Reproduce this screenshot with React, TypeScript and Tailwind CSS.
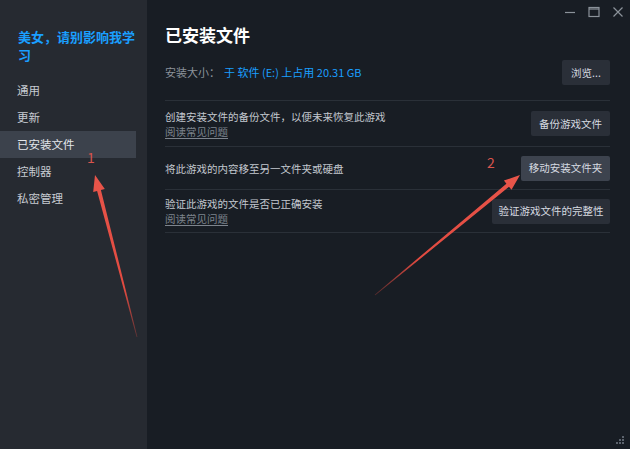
import { Fragment } from 'react';

const navItems = ['通用', '更新', '已安装文件', '控制器', '私密管理'];

function Row({ text, faq, button, width, active, first }: { text: string; faq?: boolean; button: string; width: string; active?: boolean; first?: boolean }) {
  return (
    <div className={`flex items-center justify-between border-b border-[#2a3038] ${first ? 'h-[46px]' : 'h-[43px]'}`}>
      <div className="flex flex-col leading-[15px]">
        <span className="text-[10.5px] text-[#c3c8cf]">{text}</span>
        {faq && <span className="text-[10.5px] text-[#7d848d] underline underline-offset-2">阅读常见问题</span>}
      </div>
      <button
        className={`h-[25px] ${width} text-[10.5px] text-[#d6dae0] rounded-[2px] ${active ? 'bg-[#3d434e]' : 'bg-[#2a2f38]'}`}
      >
        {button}
      </button>
    </div>
  );
}

export default function App() {
  return (
    <div
      className="relative w-[630px] h-[449px] flex bg-[#181d24] overflow-hidden"
      style={{ fontFamily: '"Noto Sans CJK SC", "Noto Sans", sans-serif' }}
    >
      {/* sidebar */}
      <aside className="w-[147px] shrink-0 bg-[#262a31] pt-[28px]">
        <h2 className="pl-[18px] w-[140px] text-[13px] leading-[18px] font-bold text-[#1a9fff]">美女，请别影响我学习</h2>
        <nav className="mt-[13px] flex flex-col">
          {navItems.map((item) => (
            <Fragment key={item}>
              <div
                className={`h-[27px] w-[136px] flex items-center pl-[17px] text-[11.5px] ${
                  item === '已安装文件' ? 'bg-[#3c424c] text-[#e4e7eb]' : 'text-[#c6cbd1]'
                }`}
              >
                {item}
              </div>
            </Fragment>
          ))}
        </nav>
      </aside>

      {/* main */}
      <main className="relative flex-1 pt-[24px] pl-[18px] pr-[20px]">
        <div className="absolute top-[6px] right-[6px] flex items-center gap-[12px] text-[#8b929a]">
          <svg width="12" height="12" viewBox="0 0 12 12"><path d="M1 6.5h10" stroke="currentColor" strokeWidth="1.2" /></svg>
          <svg width="12" height="12" viewBox="0 0 12 12"><rect x="1" y="1.5" width="10" height="9" fill="none" stroke="currentColor" strokeWidth="1.2" /><path d="M1 3h10" stroke="currentColor" strokeWidth="1.2" /></svg>
          <svg width="12" height="12" viewBox="0 0 12 12"><path d="M1.5 1.5l9 9M10.5 1.5l-9 9" stroke="currentColor" strokeWidth="1.2" /></svg>
        </div>

        <h1 className="text-[17px] leading-[22px] font-bold text-white">已安装文件</h1>

        <div className="mt-[14px] h-[25px] flex items-center justify-between">
          <div className="text-[11px]">
            <span className="text-[#8b929a]">安装大小：</span>
            <span className="ml-[4px] text-[#1a9fff]">于 软件 (E:) 上占用 20.31 GB</span>
          </div>
          <button className="h-[25px] w-[48px] text-[10.5px] text-[#d6dae0] bg-[#2a2f38] rounded-[2px]">浏览...</button>
        </div>

        <div className="mt-[15px] border-t border-[#2a3038]">
          <Row first text="创建安装文件的备份文件，以便未来恢复此游戏" faq button="备份游戏文件" width="w-[79px]" />
          <Row text="将此游戏的内容移至另一文件夹或硬盘" button="移动安装文件夹" width="w-[89px]" active />
          <Row text="验证此游戏的文件是否已正确安装" faq button="验证游戏文件的完整性" width="w-[118px]" />
        </div>

        <div className="absolute bottom-[4px] right-[5px]">
          <svg width="10" height="10" viewBox="0 0 10 10" fill="#5c636d">
            <rect x="7" y="1" width="2" height="2" />
            <rect x="4" y="4" width="2" height="2" />
            <rect x="7" y="4" width="2" height="2" />
            <rect x="1" y="7" width="2" height="2" />
            <rect x="4" y="7" width="2" height="2" />
            <rect x="7" y="7" width="2" height="2" />
          </svg>
        </div>
      </main>

      {/* annotations */}
      <span className="absolute left-[87px] top-[148px] text-[14px] leading-[18px] text-[#d9544d]">1</span>
      <span className="absolute left-[487px] top-[153px] text-[14px] leading-[18px] text-[#d9544d]">2</span>
      <svg className="absolute inset-0 pointer-events-none" width="630" height="449" viewBox="0 0 630 449">
        <defs>
          <linearGradient id="a1" x1="137" y1="337" x2="95" y2="175" gradientUnits="userSpaceOnUse">
            <stop offset="0" stopColor="#e24a40" stopOpacity="0.3" />
            <stop offset="0.3" stopColor="#e24a40" />
            <stop offset="1" stopColor="#e8554a" />
          </linearGradient>
          <linearGradient id="a2" x1="375" y1="295" x2="520" y2="175" gradientUnits="userSpaceOnUse">
            <stop offset="0" stopColor="#e24a40" stopOpacity="0.3" />
            <stop offset="0.3" stopColor="#e24a40" />
            <stop offset="1" stopColor="#e8554a" />
          </linearGradient>
        </defs>
        <polygon fill="url(#a1)" points="95,175 104.8,189 100.9,190 137.4,337 136.6,337 97.1,191 93.2,192" />
        <polygon fill="url(#a2)" points="520,175 511.5,189.8 509,186.7 375.3,295.3 374.7,294.7 506.4,183.7 503.9,180.6" />
      </svg>
    </div>
  );
}
